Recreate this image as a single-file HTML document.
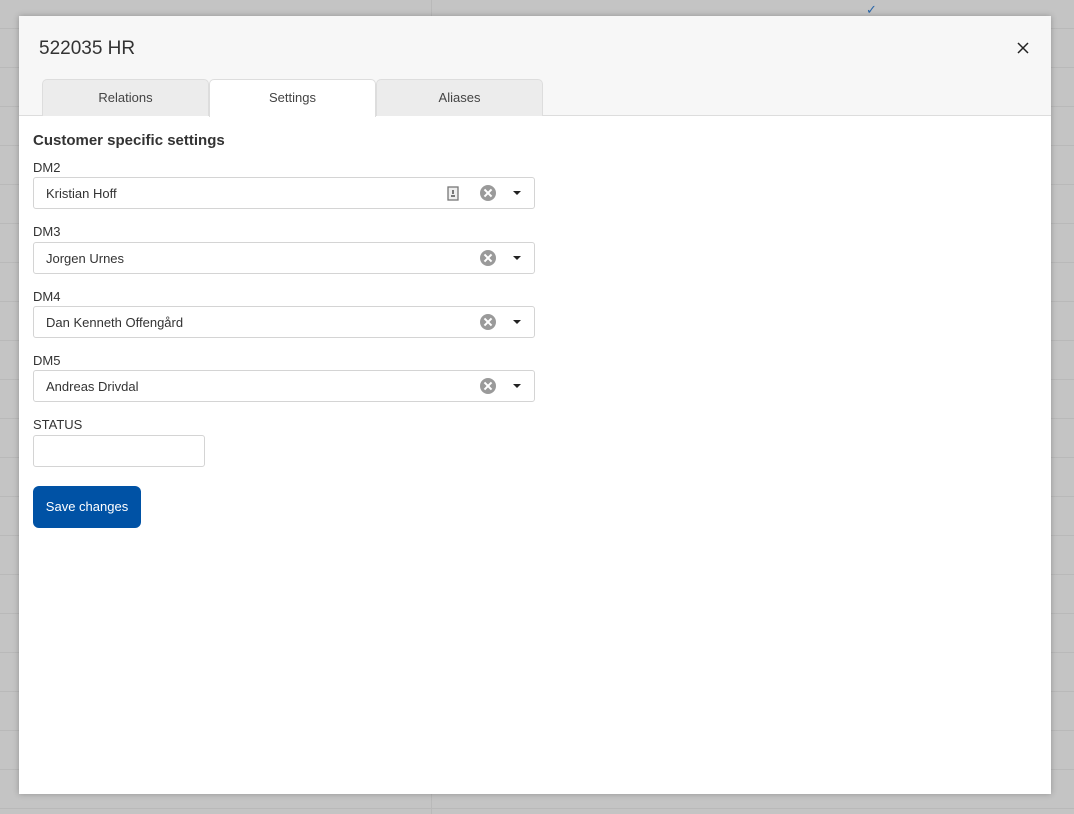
<!DOCTYPE html>
<html><head><meta charset="utf-8"><style>
*{box-sizing:border-box;margin:0;padding:0}
body{width:1074px;height:814px;overflow:hidden;background:#c4c4c4;font-family:"Liberation Sans",sans-serif;color:#333;position:relative;
background-image:repeating-linear-gradient(to bottom,transparent 0,transparent 28px,#b9b9b9 28px,#b9b9b9 29px,transparent 29px,transparent 39px);}
.vl{position:absolute;left:431px;top:0;width:1px;height:814px;background:#b9b9b9}
.chk{position:absolute;left:866px;top:2px;color:#2a66a8;font-size:13px}
.modal{position:absolute;left:19px;top:16px;width:1032px;height:778px;background:#fff;box-shadow:0 0 6px rgba(0,0,0,.25)}
.hdr{position:absolute;left:0;top:0;width:100%;height:100px;background:#f7f7f7;border-bottom:1px solid #ddd}
.title{position:absolute;left:20px;top:22px;font-size:19px;color:#333}
.close{position:absolute;left:998px;top:26px}
.tab{position:absolute;top:63px;height:37px;width:167px;background:#ececec;border:1px solid #ddd;border-bottom:none;border-radius:5px 5px 0 0;text-align:center;font-size:13px;line-height:36px;color:#444}
.tab.act{background:#fff;height:38px}
.h{position:absolute;left:14px;top:116px;font-size:15px;font-weight:bold;color:#333}
.lbl{position:absolute;left:14px;font-size:13px;color:#333}
.sel{position:absolute;left:14px;width:502px;height:32px;border:1px solid #d4d4d4;border-radius:3px;font-size:13px;line-height:31px;padding-left:12px;color:#333}
.x{position:absolute;right:38px;top:7px;width:16px;height:16px;border-radius:50%;background:#9a9a9a}
.x:before,.x:after{content:"";position:absolute;left:7px;top:3px;width:2px;height:10px;background:#fff;transform:rotate(45deg)}
.x:after{transform:rotate(-45deg)}
.ar{position:absolute;right:13px;top:13px;border-left:4px solid transparent;border-right:4px solid transparent;border-top:4px solid #222}
.btn{position:absolute;left:14px;top:470px;width:108px;height:42px;background:#0052a5;border-radius:6px;color:#fff;font-size:13px;text-align:center;line-height:41px}
</style></head><body>
<div class="vl"></div><div class="chk">✓</div>
<div class="modal">
<div class="hdr">
<div class="title">522035 HR</div>
<svg class="close" width="12" height="12" viewBox="0 0 12 12"><path d="M1 1L11 11M11 1L1 11" stroke="#222" stroke-width="1.5"/></svg>
</div>
<div class="tab" style="left:23px">Relations</div>
<div class="tab act" style="left:190px">Settings</div>
<div class="tab" style="left:357px">Aliases</div>
<div class="h">Customer specific settings</div>
<div class="lbl" style="top:144px">DM2</div>
<div class="sel" style="top:161px">Kristian Hoff
<svg style="position:absolute;left:413px;top:8px" width="12" height="15" viewBox="0 0 12 15"><rect x="1" y="1" width="10" height="13" fill="#eee" stroke="#777" stroke-width="1.3"/><rect x="5" y="4" width="2" height="4" fill="#777"/><rect x="4" y="9" width="4" height="2" fill="#777"/></svg>
<div class="x"></div><div class="ar"></div></div>
<div class="lbl" style="top:208px">DM3</div>
<div class="sel" style="top:226px">Jorgen Urnes<div class="x"></div><div class="ar"></div></div>
<div class="lbl" style="top:273px">DM4</div>
<div class="sel" style="top:290px">Dan Kenneth Offengård<div class="x"></div><div class="ar"></div></div>
<div class="lbl" style="top:337px">DM5</div>
<div class="sel" style="top:354px">Andreas Drivdal<div class="x"></div><div class="ar"></div></div>
<div class="lbl" style="top:401px">STATUS</div>
<div class="sel" style="top:419px;width:172px"></div>
<div class="btn">Save changes</div>
</div>
</body></html>
